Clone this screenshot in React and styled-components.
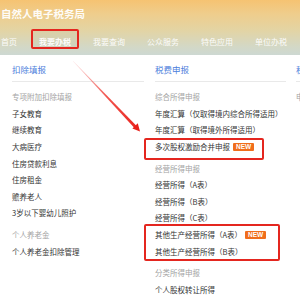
import React from "react";
import styled, { createGlobalStyle } from "styled-components";

const GlobalStyle = createGlobalStyle`
  html, body { margin: 0; padding: 0; background: #fff; overflow: hidden; }
  body { font-family: "Noto Sans CJK SC", "Noto Sans", sans-serif; }
`;

const Page = styled.div`
  position: relative;
  width: 300px;
  height: 300px;
  overflow: hidden;
  background: #fff;
`;

const Header = styled.header`
  height: 55px;
  box-sizing: border-box;
  padding-top: 7px;
  background: linear-gradient(180deg, #f6c372 0%, #efcd8c 25%, #e3d4a4 55%, #d3d8c6 85%, #cdd8d2 100%);
`;

const SiteTitle = styled.div`
  margin-left: 1px;
  font-size: 10.5px;
  line-height: 13px;
  font-weight: 600;
  color: rgba(255, 255, 255, 0.95);
`;

const Nav = styled.nav`
  display: flex;
  gap: 6px;
  margin-top: 9px;
  margin-left: -7px;
`;

const NavItem = styled.div`
  box-sizing: border-box;
  height: 20px;
  padding: 2px 6px 0;
  line-height: 18px;
  font-size: 8px;
  white-space: nowrap;
  color: rgba(255, 255, 255, 0.95);
  font-weight: ${(p) => (p.$active ? 700 : 400)};
  border: 2px solid ${(p) => (p.$active ? "#e4261f" : "transparent")};
  border-radius: 2px;
  background: ${(p) => (p.$active ? "rgba(190,190,170,0.2)" : "transparent")};
`;

const Columns = styled.div`
  display: grid;
  grid-template-columns: 132px 132px 132px;
  column-gap: 10px;
  padding-left: 12px;
  padding-top: 8px;
`;

const Column = styled.div`
  display: flex;
  flex-direction: column;
  padding-left: ${(p) => p.$indent || 0}px;
`;

const ColTitle = styled.div`
  font-size: 8.5px;
  line-height: 12px;
  color: #4d80dc;
  padding-bottom: 6px;
  border-bottom: 1px solid #e9e9e9;
  margin-bottom: 7.2px;
  white-space: nowrap;
`;

const GroupLabel = styled.div`
  font-size: 7.5px;
  line-height: 16.6px;
  height: 16.6px;
  color: #a3a3a3;
  white-space: nowrap;
  margin-top: ${(p) => (p.$first ? 0 : 5)}px;
`;

const Item = styled.div`
  display: flex;
  align-items: center;
  font-size: 7.5px;
  line-height: 16.6px;
  height: 16.6px;
  color: #333;
  white-space: nowrap;
`;

const NewBadge = styled.span`
  display: inline-block;
  margin-left: 3px;
  padding: 0 3px;
  height: 8px;
  line-height: 8px;
  font-size: 6.5px;
  font-weight: 700;
  font-family: "Liberation Sans", Arial, sans-serif;
  color: #fff;
  background: #f06e1c;
  border-radius: 1px;
`;

const Highlight = styled.div`
  position: relative;
  &::after {
    content: "";
    position: absolute;
    left: -11px;
    top: ${(p) => p.$top}px;
    bottom: ${(p) => p.$bottom}px;
    width: ${(p) => p.$width}px;
    border: 2px solid #e4261f;
    border-radius: 2px;
    box-sizing: border-box;
    pointer-events: none;
  }
`;

const ArrowLayer = styled.svg`
  position: absolute;
  left: 0;
  top: 0;
  width: 300px;
  height: 300px;
  pointer-events: none;
`;

function Arrow() {
  return (
    <ArrowLayer viewBox="0 0 300 300">
      <defs>
        <linearGradient id="arr" x1="73" y1="61" x2="140" y2="131" gradientUnits="userSpaceOnUse">
          <stop offset="0" stopColor="#f04040" stopOpacity="0.15" />
          <stop offset="0.5" stopColor="#ee2a22" stopOpacity="0.8" />
          <stop offset="1" stopColor="#e8201a" stopOpacity="1" />
        </linearGradient>
      </defs>
      <polygon points="73,61.2 73.2,61 136.4,125.7 134.2,127.8" fill="url(#arr)" />
      <polygon points="140,131.5 132.4,128.6 137.8,123.3" fill="#e8201a" />
    </ArrowLayer>
  );
}

const navItems = ["首页", "我要办税", "我要查询", "公众服务", "特色应用", "单位办税"];

export default function App() {
  return (
    <Page>
      <GlobalStyle />
      <Header>
        <SiteTitle>自然人电子税务局</SiteTitle>
        <Nav>
          {navItems.map((n) => (
            <NavItem key={n} $active={n === "我要办税"}>
              {n}
            </NavItem>
          ))}
        </Nav>
      </Header>
      <Columns>
        <Column>
          <ColTitle>扣除填报</ColTitle>
          <GroupLabel $first>专项附加扣除填报</GroupLabel>
          <Item>子女教育</Item>
          <Item>继续教育</Item>
          <Item>大病医疗</Item>
          <Item>住房贷款利息</Item>
          <Item>住房租金</Item>
          <Item>赡养老人</Item>
          <Item>3岁以下婴幼儿照护</Item>
          <GroupLabel>个人养老金</GroupLabel>
          <Item>个人养老金扣除管理</Item>
        </Column>
        <Column $indent={1}>
          <ColTitle>税费申报</ColTitle>
          <GroupLabel $first>综合所得申报</GroupLabel>
          <Item>年度汇算（仅取得境内综合所得适用）</Item>
          <Item>年度汇算（取得境外所得适用）</Item>
          <Highlight $top={-1} $bottom={-4} $width={120}>
            <Item>
              多次股权激励合并申报<NewBadge>NEW</NewBadge>
            </Item>
          </Highlight>
          <GroupLabel>经营所得申报</GroupLabel>
          <Item>经营所得（A表）</Item>
          <Item>经营所得（B表）</Item>
          <Item>经营所得（C表）</Item>
          <Highlight $top={-3} $bottom={-1} $width={136}>
            <Item>
              其他生产经营所得（A表）<NewBadge>NEW</NewBadge>
            </Item>
            <Item>其他生产经营所得（B表）</Item>
          </Highlight>
          <GroupLabel>分类所得申报</GroupLabel>
          <Item>个人股权转让所得</Item>
        </Column>
        <Column>
          <ColTitle>税费缴纳</ColTitle>
          <GroupLabel $first>申报缴税</GroupLabel>
        </Column>
      </Columns>
      <Arrow />
    </Page>
  );
}
